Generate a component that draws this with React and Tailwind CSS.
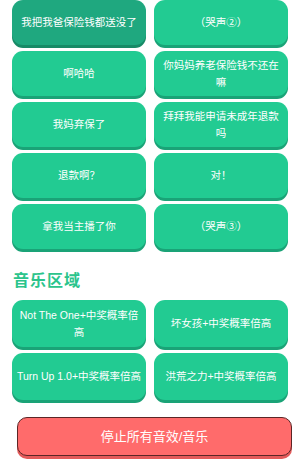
import React from "react";

const sounds = [
  "我把我爸保险钱都送没了",
  "（哭声②）",
  "啊哈哈",
  "你妈妈养老保险钱不还在嘛",
  "我妈弃保了",
  "拜拜我能申请未成年退款吗",
  "退款啊？",
  "对！",
  "拿我当主播了你",
  "（哭声③）",
];

const music = [
  "Not The One+中奖概率倍高",
  "坏女孩+中奖概率倍高",
  "Turn Up 1.0+中奖概率倍高",
  "洪荒之力+中奖概率倍高",
];

const SoundButton = ({ label, active, tall }) => (
  <button
    className={
      "flex items-center justify-center rounded-[11px] text-center text-[10.5px] leading-[17px] text-white " +
      (tall ? "h-[47px] px-[3px] " : "h-[45px] px-[6px] ") +
      (active
        ? "bg-[#1fa87f] shadow-[0_3px_0_#178a66]"
        : "bg-[#22cb92] shadow-[0_3px_0_#1aa377]")
    }
  >
    {label}
  </button>
);

export default function App() {
  return (
    <div
      className="w-[300px] h-[474px] overflow-hidden bg-white"
      style={{ fontFamily: '"Liberation Sans", "Noto Sans CJK SC", sans-serif' }}
    >
      <div className="grid grid-cols-2 gap-x-2 gap-y-[6px] px-3">
        {sounds.map((s, i) => (
          <SoundButton key={i} label={s} active={i === 0} />
        ))}
      </div>
      <h2 className="pl-[13px] pt-[21px] pb-[8px] text-[16px] leading-[22px] font-bold tracking-[1px] text-[#2bc48c]">
        音乐区域
      </h2>
      <div className="grid grid-cols-2 gap-x-2 gap-y-[6px] px-3">
        {music.map((s, i) => (
          <SoundButton key={i} label={s} tall />
        ))}
      </div>
      <div className="mt-[17px] ml-[17px] mr-[8px]">
        <button className="flex h-[39px] w-full items-center justify-center rounded-[10px] border border-[#5b2626] bg-[#ff6b6b] text-[13px] text-white shadow-[0_3px_0_#e35a5a]">
          停止所有音效/音乐
        </button>
      </div>
    </div>
  );
}
